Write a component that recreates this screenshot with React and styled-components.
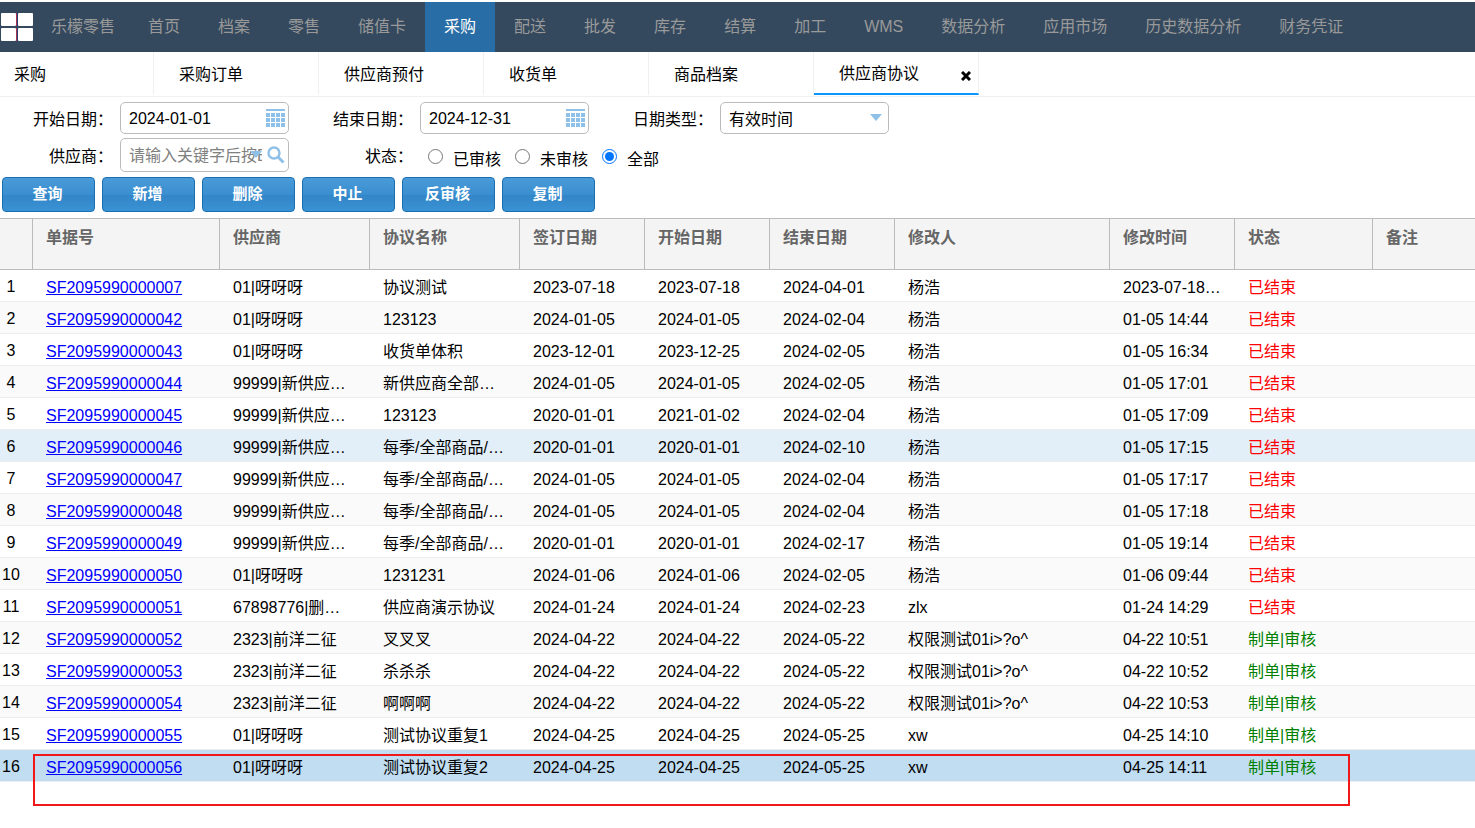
import React, { useState } from 'react'
import styled, { createGlobalStyle } from 'styled-components'

const menus = [
  '首页', '档案', '零售', '储值卡', '采购', '配送', '批发', '库存', '结算',
  '加工', 'WMS', '数据分析', '应用市场', '历史数据分析', '财务凭证'
]

const tabs = ['采购', '采购订单', '供应商预付', '收货单', '商品档案', '供应商协议']

const actions = ['查询', '新增', '删除', '中止', '反审核', '复制']

const columns = [
  { title: '', width: 33 },
  { title: '单据号', width: 187 },
  { title: '供应商', width: 150 },
  { title: '协议名称', width: 150 },
  { title: '签订日期', width: 125 },
  { title: '开始日期', width: 125 },
  { title: '结束日期', width: 125 },
  { title: '修改人', width: 215 },
  { title: '修改时间', width: 125 },
  { title: '状态', width: 138 },
  { title: '备注' }
]

const DONE = '已结束'
const DRAFT = '制单|审核'

const rows = [
  ['SF2095990000007', '01|呀呀呀', '协议测试', '2023-07-18', '2023-07-18', '2024-04-01', '杨浩', '2023-07-18 10:20', DONE],
  ['SF2095990000042', '01|呀呀呀', '123123', '2024-01-05', '2024-01-05', '2024-02-04', '杨浩', '01-05 14:44', DONE],
  ['SF2095990000043', '01|呀呀呀', '收货单体积', '2023-12-01', '2023-12-25', '2024-02-05', '杨浩', '01-05 16:34', DONE],
  ['SF2095990000044', '99999|新供应商测试', '新供应商全部商品', '2024-01-05', '2024-01-05', '2024-02-05', '杨浩', '01-05 17:01', DONE],
  ['SF2095990000045', '99999|新供应商测试', '123123', '2020-01-01', '2021-01-02', '2024-02-04', '杨浩', '01-05 17:09', DONE],
  ['SF2095990000046', '99999|新供应商测试', '每季/全部商品/固定', '2020-01-01', '2020-01-01', '2024-02-10', '杨浩', '01-05 17:15', DONE],
  ['SF2095990000047', '99999|新供应商测试', '每季/全部商品/固定', '2024-01-05', '2024-01-05', '2024-02-04', '杨浩', '01-05 17:17', DONE],
  ['SF2095990000048', '99999|新供应商测试', '每季/全部商品/固定', '2024-01-05', '2024-01-05', '2024-02-04', '杨浩', '01-05 17:18', DONE],
  ['SF2095990000049', '99999|新供应商测试', '每季/全部商品/固定', '2020-01-01', '2020-01-01', '2024-02-17', '杨浩', '01-05 19:14', DONE],
  ['SF2095990000050', '01|呀呀呀', '1231231', '2024-01-06', '2024-01-06', '2024-02-05', '杨浩', '01-06 09:44', DONE],
  ['SF2095990000051', '67898776|删除测试', '供应商演示协议', '2024-01-24', '2024-01-24', '2024-02-23', 'zlx', '01-24 14:29', DONE],
  ['SF2095990000052', '2323|前洋二征', '叉叉叉', '2024-04-22', '2024-04-22', '2024-05-22', '权限测试01i>?o^', '04-22 10:51', DRAFT],
  ['SF2095990000053', '2323|前洋二征', '杀杀杀', '2024-04-22', '2024-04-22', '2024-05-22', '权限测试01i>?o^', '04-22 10:52', DRAFT],
  ['SF2095990000054', '2323|前洋二征', '啊啊啊', '2024-04-22', '2024-04-22', '2024-05-22', '权限测试01i>?o^', '04-22 10:53', DRAFT],
  ['SF2095990000055', '01|呀呀呀', '测试协议重复1', '2024-04-25', '2024-04-25', '2024-05-25', 'xw', '04-25 14:10', DRAFT],
  ['SF2095990000056', '01|呀呀呀', '测试协议重复2', '2024-04-25', '2024-04-25', '2024-05-25', 'xw', '04-25 14:11', DRAFT]
]

const Logo = () => (
  <svg width='32' height='28' viewBox='0 0 32 28' aria-hidden='true'>
    <rect x='0' y='0' width='15' height='13' rx='1' fill='#fff' />
    <rect x='17' y='0' width='15' height='13' rx='1' fill='#fff' />
    <rect x='0' y='15' width='15' height='13' rx='1' fill='#fff' />
    <rect x='17' y='15' width='15' height='13' rx='1' fill='#fff' />
    <path d='M15.5 0v13M15.5 15v13' stroke='#a8324c' />
    <path d='M16.5 0v13M16.5 15v13' stroke='#2c3f78' />
  </svg>
)

const CalendarIcon = () => (
  <svg width='19' height='18' viewBox='0 0 19 18' fill='#8fc1e8' aria-hidden='true'>
    <rect width='19' height='2' />
    {[4, 9, 14].map(y =>
      [0, 5, 10, 15].map(x => (
        <rect key={x + '-' + y} x={x} y={y} width='4' height='4' />
      ))
    )}
  </svg>
)

const SearchIcon = () => (
  <svg width='18' height='18' viewBox='0 0 18 18' fill='none' stroke='#8fc1e8' aria-hidden='true'>
    <circle cx='7' cy='7' r='5.5' strokeWidth='2.4' />
    <path d='M11 11l5.5 5.5' strokeWidth='3' />
  </svg>
)

const Arrow = () => (
  <svg width='12' height='8' viewBox='0 0 12 8' fill='#8fc1e8' aria-hidden='true'>
    <path d='M0 0h12L6 7z' />
  </svg>
)

const CloseIcon = () => (
  <svg width='10' height='10' viewBox='0 0 10 10' stroke='#000' strokeWidth='3' aria-hidden='true'>
    <path d='M1 1l8 8M9 1l-8 8' />
  </svg>
)

const App = () => {
  const [status, setStatus] = useState('全部')

  return (
    <>
      <GlobalStyle />
      <Nav>
        <Brand href='#'>
          <Logo />
          乐檬零售
        </Brand>
        {menus.map(m => (
          <NavItem key={m} href='#' $active={m === '采购'}>
            {m}
          </NavItem>
        ))}
      </Nav>

      <Tabs>
        {tabs.map((t, i) => (
          <Tab key={t} $first={i === 0} $active={t === '供应商协议'}>
            <TabButton type='button'>{t}</TabButton>
            {t === '供应商协议' && (
              <Close type='button' aria-label='关闭'>
                <CloseIcon />
              </Close>
            )}
          </Tab>
        ))}
      </Tabs>

      <Filters>
        <Field>
          <Label htmlFor='start'>开始日期：</Label>
          <Control>
            <Input id='start' defaultValue='2024-01-01' />
            <IconButton type='button' aria-label='选择开始日期'>
              <CalendarIcon />
            </IconButton>
          </Control>
        </Field>
        <Field>
          <Label htmlFor='end'>结束日期：</Label>
          <Control>
            <Input id='end' defaultValue='2024-12-31' />
            <IconButton type='button' aria-label='选择结束日期'>
              <CalendarIcon />
            </IconButton>
          </Control>
        </Field>
        <Field>
          <Label htmlFor='type'>日期类型：</Label>
          <Control>
            <Select id='type' defaultValue='有效时间'>
              <option>有效时间</option>
            </Select>
            <SelectArrow>
              <Arrow />
            </SelectArrow>
          </Control>
        </Field>
        <Field>
          <Label htmlFor='supplier'>供应商：</Label>
          <Control $tall>
            <Input id='supplier' placeholder='请输入关键字后按Enter键' />
            <SupplierArrow>
              <Arrow />
            </SupplierArrow>
            <IconButton type='button' aria-label='搜索'>
              <SearchIcon />
            </IconButton>
          </Control>
        </Field>
        <Field>
          <Label as='span'>状态：</Label>
          <Radios role='radiogroup' aria-label='状态'>
            {['已审核', '未审核', '全部'].map(s => (
              <RadioLabel key={s}>
                <Radio
                  type='radio'
                  name='status'
                  checked={status === s}
                  onChange={() => setStatus(s)}
                />
                <RadioText>{s}</RadioText>
              </RadioLabel>
            ))}
          </Radios>
        </Field>
      </Filters>

      <Actions>
        {actions.map(a => (
          <Button key={a} type='button'>
            {a}
          </Button>
        ))}
      </Actions>

      <TableWrap>
        <Table>
          <colgroup>
            {columns.map((c, i) => (
              <Col key={i} $width={c.width} />
            ))}
          </colgroup>
          <thead>
            <tr>
              {columns.map((c, i) => (
                <Th key={i}>{c.title}</Th>
              ))}
            </tr>
          </thead>
          <tbody>
            {rows.map((r, i) => (
              <Row key={r[0]} $hovered={i === 5} $selected={i === 15}>
                <IndexCell>{i + 1}</IndexCell>
                <Td>
                  <DocLink href='#'>{r[0]}</DocLink>
                </Td>
                {r.slice(1, 8).map((v, j) => (
                  <Td key={j}>{v}</Td>
                ))}
                <Td $color={r[8] === DONE ? '#ff0000' : '#008000'}>{r[8]}</Td>
                <Td />
              </Row>
            ))}
          </tbody>
        </Table>
        <Marker />
      </TableWrap>
    </>
  )
}

export default App

const GlobalStyle = createGlobalStyle`
  * {
    box-sizing: border-box;
  }
  body {
    margin: 0;
    padding-top: 2px;
    background: #fff;
    color: #000;
    font-family: 'Liberation Sans', 'Noto Sans CJK SC', sans-serif;
    font-size: 16px;
    line-height: 24px;
  }
  button, input, select {
    font: inherit;
    color: inherit;
  }
  svg {
    display: block;
  }
`

const Nav = styled.nav`
  display: flex;
  height: 50px;
  background: #34495e;
  white-space: nowrap;
  overflow: hidden;
`

const NavItem = styled.a`
  display: flex;
  align-items: center;
  padding: 0 19px;
  color: ${props => (props.$active ? '#fff' : '#999')};
  background: ${props => (props.$active ? '#286da5' : 'transparent')};
  text-decoration: none;
`

const Brand = styled(NavItem)`
  gap: 18px;
  width: 129px;
  padding: 0 0 0 1px;
`

const Tabs = styled.div`
  display: flex;
  height: 45px;
  border-bottom: 1px solid #f0f0f0;
`

const Tab = styled.div`
  display: flex;
  align-items: center;
  justify-content: space-between;
  width: ${props => (props.$first ? '154px' : '165px')};
  height: 43px;
  padding: 2px 7px 0 ${props => (props.$first ? '14px' : '25px')};
  border-right: 1px solid #f0f0f0;
  border-bottom: ${props => (props.$active ? '2px solid #0a95ff' : 'none')};
`

const TabButton = styled.button`
  padding: 0;
  border: 0;
  background: none;
`

const Close = styled.button`
  padding: 4px 0 0;
  border: 0;
  background: none;
`

const Filters = styled.form`
  display: grid;
  grid-template-columns: repeat(3, 300px);
  row-gap: 4px;
  padding-top: 5px;
`

const Field = styled.div`
  display: flex;
  align-items: center;
  white-space: nowrap;
`

const Label = styled.label`
  flex: none;
  width: 120px;
  padding: 3px 7px 0 0;
  text-align: right;
`

const Control = styled.div`
  position: relative;
  display: flex;
  align-items: center;
  width: 169px;
  height: ${props => (props.$tall ? '34px' : '32px')};
  padding: 0 3px 0 8px;
  border: 1px solid #bbb;
  border-radius: 5px;
`

const Input = styled.input`
  flex: 1;
  min-width: 0;
  height: 26px;
  padding: 2px 0 0;
  border: 0;
  outline: 0;
  background: none;
  &::placeholder {
    color: #808080;
    opacity: 1;
  }
`

const IconButton = styled.button`
  margin-left: 5px;
  padding: 0;
  border: 0;
  background: none;
`

const Select = styled.select`
  appearance: none;
  flex: 1;
  height: 28px;
  padding: 3px 0 0;
  border: 0;
  background: none;
`

const SelectArrow = styled.span`
  position: absolute;
  top: 11px;
  right: 6px;
  pointer-events: none;
`

const SupplierArrow = styled(SelectArrow)`
  top: 12px;
  right: 26px;
`

const Radios = styled.div`
  display: flex;
  gap: 14px;
  padding-left: 8px;
`

const RadioLabel = styled.label`
  display: flex;
  align-items: center;
  gap: 10px;
`

const Radio = styled.input`
  flex: none;
  width: 15px;
  height: 15px;
  margin: 2px 0 0;
`

const RadioText = styled.span`
  padding-top: 10px;
`

const Actions = styled.div`
  display: flex;
  gap: 7px;
  padding: 5px 2px 6px;
`

const Button = styled.button`
  width: 93px;
  height: 35px;
  padding: 0 2px 2px 0;
  border: 1px solid #1a6fb0;
  border-radius: 4px;
  background: linear-gradient(#4a9ad8, #3a8fd0 50%, #3385c6 51%, #3992d4);
  color: #fff;
  font-size: 15px;
  font-weight: bold;
`

const TableWrap = styled.div`
  position: relative;
  padding-bottom: 24px;
`

const Table = styled.table`
  width: 100%;
  table-layout: fixed;
  border-collapse: separate;
  border-spacing: 0;
`

const Col = styled.col`
  width: ${props => (props.$width ? props.$width + 'px' : 'auto')};
`

const Th = styled.th`
  height: 52px;
  padding: 7px 14px 0 13px;
  border: solid #bbb;
  border-width: 1px 1px 1px 0;
  background: #f4f4f4;
  color: #666;
  text-align: left;
  vertical-align: top;
  &:last-child {
    border-right: 0;
  }
`

const Row = styled.tr`
  background: ${props =>
    props.$selected ? '#c1ddf1' : props.$hovered ? '#e2eef8' : '#fff'};
  &:nth-child(even) {
    background: ${props =>
      props.$selected ? '#c1ddf1' : props.$hovered ? '#e2eef8' : '#fafafa'};
  }
`

const Td = styled.td`
  height: 32px;
  padding: 5px 14px 0 13px;
  border-bottom: 1px solid #ececec;
  color: ${props => props.$color || '#000'};
  white-space: nowrap;
  overflow: hidden;
  text-overflow: ellipsis;
`

const IndexCell = styled(Td)`
  padding: 2px 11px 0 0;
  text-align: center;
`

const DocLink = styled.a`
  color: #0000ff;
`

const Marker = styled.div`
  position: absolute;
  left: 33px;
  bottom: 0;
  width: 1317px;
  height: 52px;
  border: 2px solid #f01818;
  pointer-events: none;
`
